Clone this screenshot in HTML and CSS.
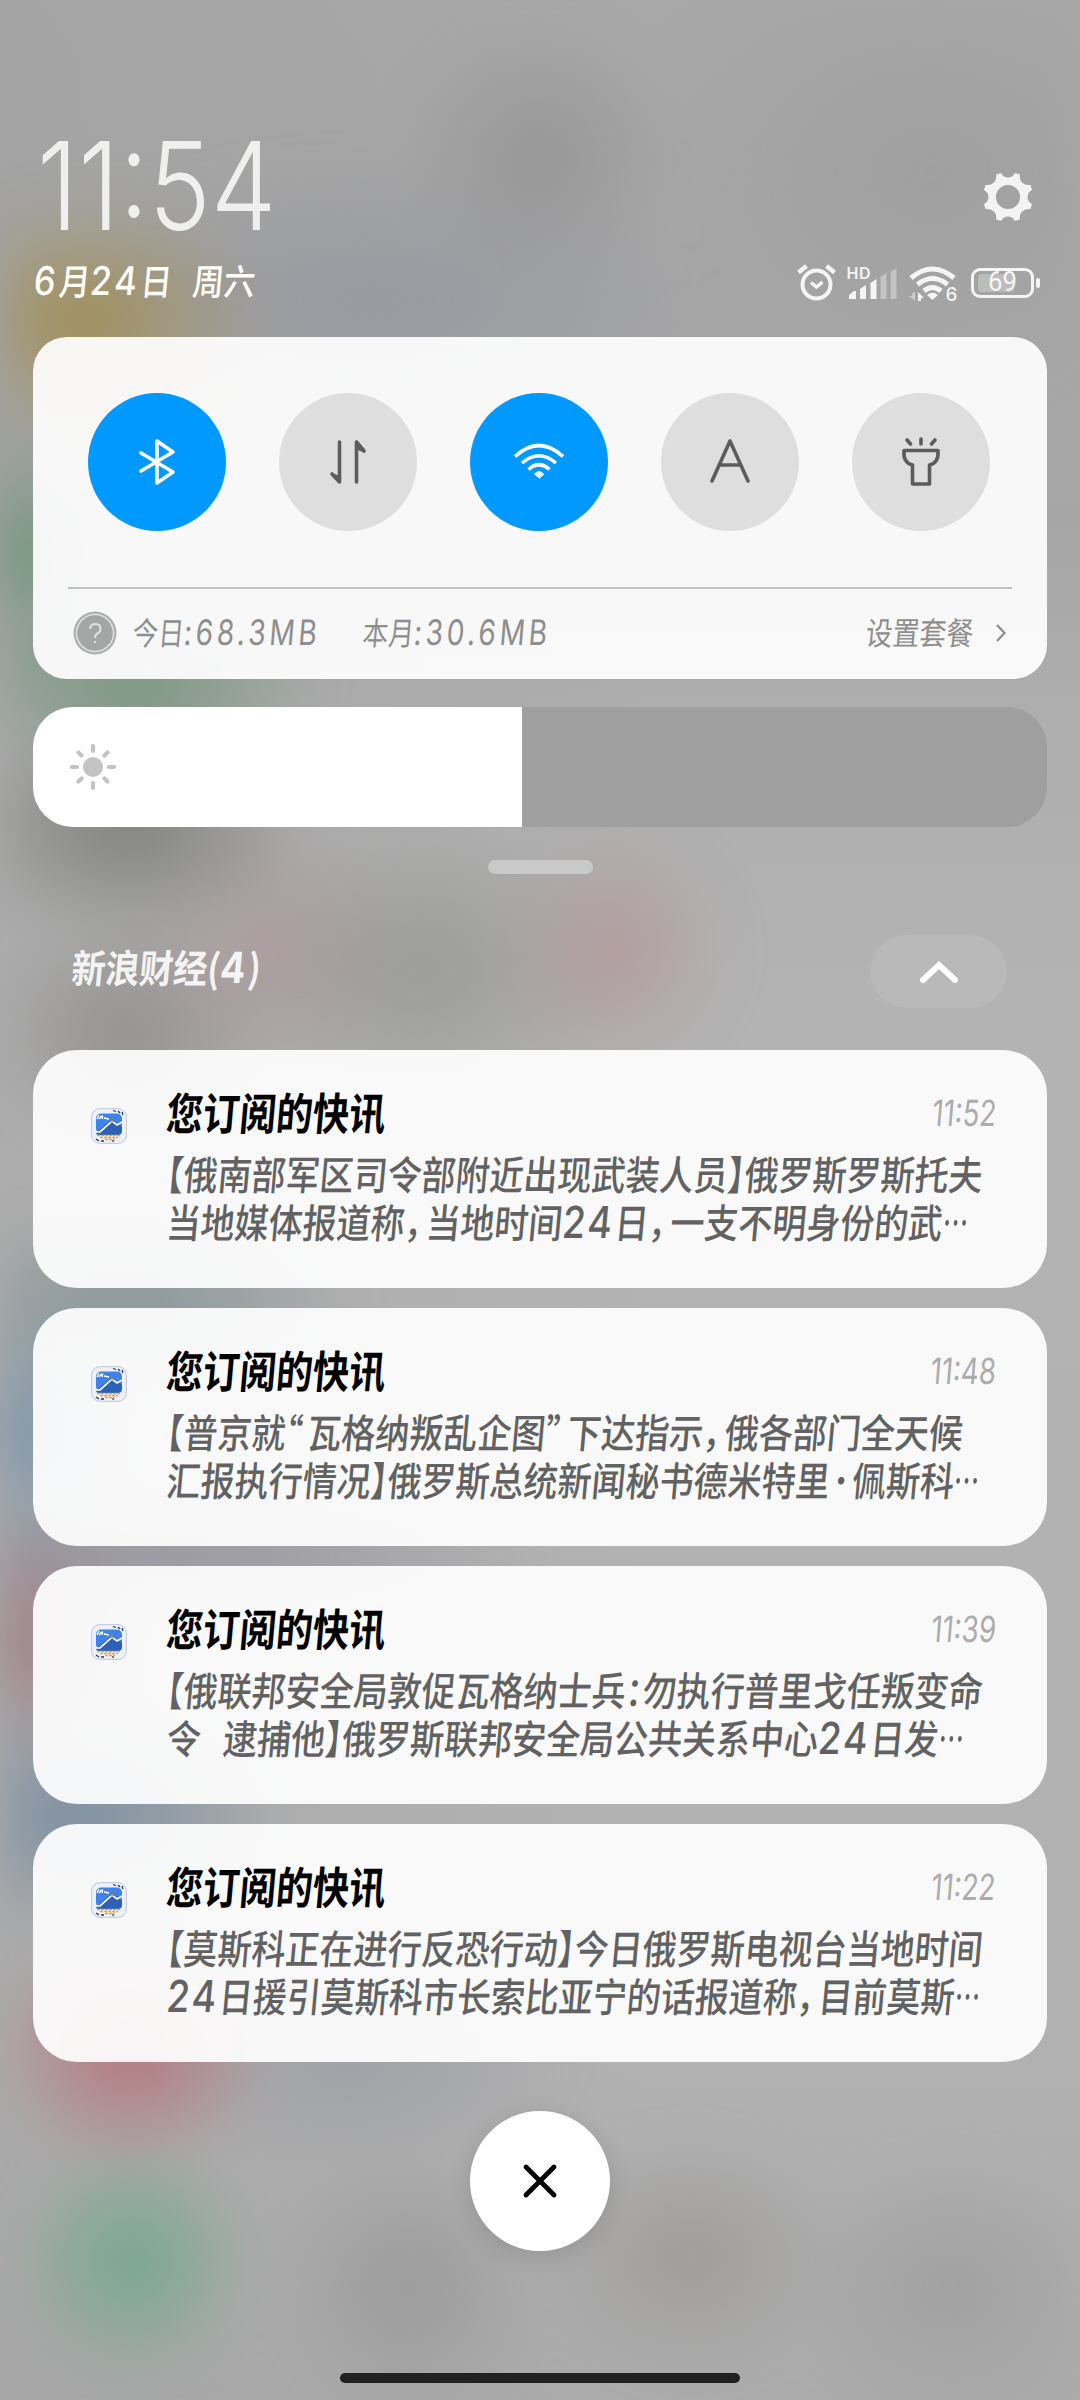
FILE: index.html
```html
<!DOCTYPE html>
<html lang="zh-CN">
<head>
<meta charset="utf-8">
<title>通知中心</title>
<link rel="stylesheet" href="styles.css">
</head>
<body>
<svg class="defs" width="0" height="0">
  <symbol id="app" viewBox="0 0 36 36">
    <rect x=".7" y=".7" width="34.6" height="34.6" rx="8" fill="#eef2f8" stroke="#b9c5e0"/>
    <rect x="5" y="5.5" width="26" height="20" rx="5" fill="#3f82e8"/>
    <path d="M5 25l16-14 10 8v4q0 4-4 4H9q-4 0-4-2z" fill="#2c61b8"/>
    <path d="M5 24l4 0 12-11 5 4 5-3" fill="none" stroke="#fff" stroke-width="1.7"/>
    <path d="M19 14l2-3 2 3z" fill="#c79a3c"/>
    <path d="M6 11l2-4M8 11q5-6 3 0m2-1l5 1" fill="none" stroke="#fff" stroke-width="1.4"/>
    <path d="M6 27.500h24M9 29.500h18M14 31.500h10" stroke="#eba43c" stroke-width="1.300" stroke-dasharray="3 1"/>
    <path d="M22 2.500l3 1M27 3l2 2M31 4l1 3M5 31l3 2M10 33h3M21 32.500l2 1" stroke="#24395f" stroke-width="1.300"/>
  </symbol>
</svg>
<main class="shade">
  <header class="top">
    <div class="clock"><span>11:54</span></div>
    <svg class="gear" viewBox="-24 -24 48 48"><path fill="#f3f3f3" fill-rule="evenodd" d="M-12 -22.500L-7 -24Q-4.500 -19.500 0 -19.500Q4.500 -19.500 7 -24L12 -22.500Q11 -17.500 14 -14.500Q17 -11.500 22.500 -12L24 -7Q19.500 -4.500 19.500 0Q19.500 4.500 24 7L22.500 12Q17 11.500 14 14.500Q11 17.500 12 22.500L7 24Q4.500 19.500 0 19.500Q-4.500 19.500 -7 24L-12 22.500Q-11 17.500 -14 14.500Q-17 11.500 -22.500 12L-24 7Q-19.500 4.500 -19.500 0Q-19.500 -4.500 -24 -7L-22.500 -12Q-17 -11.500 -14 -14.500Q-11 -17.500 -12 -22.500ZM12 0A12 12 0 1 0 -12 0A12 12 0 1 0 12 0Z"/></svg>
  </header>
  <div class="status">
    <div class="date t"><span><b>6</b>月<b>24</b>日<i class="sp"></i>周六</span></div>
    <svg class="icons" width="248" height="40" viewBox="795 263 248 40" fill="none" stroke="#f5f5f5">
      <circle cx="816.500" cy="284.500" r="14" stroke-width="4"/>
      <path d="M811 282.500l5.500 4.500 6-5" stroke-width="3.500"/>
      <path d="M798.500 272.500l8-6.500M834.500 272.500l-8-6.500" stroke-width="4.500"/>
      <text class="hd" x="846.500" y="279" textLength="24">HD</text>
      <g fill="#f5f5f5" stroke="none">
        <path d="M849 299v-4l5-4h2v8zM860 299v-10l6-4v14zM870.500 299v-16l6-4v20z"/>
        <path opacity=".4" d="M880.500 299v-22l6-4v26zM890.500 299v-27l6-4v31z"/>
        <path d="M932.500 300l-5.500-5q5.500-4.500 11 0z"/>
        <path opacity=".5" d="M915 292v9l-6-5h3l1-4z"/>
        <path d="M918 301v-9l6 6h-3v3z"/>
      </g>
      <path stroke-width="5" d="M911 278q21.500-18 43 0M917.500 284.500q15-12 30 0M924 291q8.500-7 17 0"/>
      <text class="six" x="945.500" y="300.500">6</text>
      <rect x="972.500" y="269.500" width="60" height="27" rx="7.500" stroke-width="3"/>
      <rect x="978" y="274" width="36" height="18" rx="3" fill="#fff" fill-opacity=".28" stroke="none"/>
      <rect x="1036" y="278" width="4" height="10" rx="2" fill="#f5f5f5" stroke="none"/>
      <text class="pct" x="988" y="290.500" textLength="29" lengthAdjust="spacingAndGlyphs">69</text>
    </svg>
  </div>

  <section class="qs">
    <div class="toggles">
      <div class="tg on"><svg viewBox="-24 -24 48 48"><path d="M-16 -9L16 10 0 21V-21L16 -10-16 9"/></svg></div>
      <div class="tg"><svg viewBox="-24 -24 48 48"><path d="M-8.500 -20V20L-16 12M8.500 20V-20L16 -11"/><path class="f" d="M-8.500 9V21L-16 12L-8.500 14ZM8.500 -21V-13L16 -10Z"/></svg></div>
      <div class="tg on"><svg viewBox="-24 -24 48 48"><path class="w" d="M-24 -5.500Q0 -27.500 24 -5.500M-17 1Q0 -13.500 17 1M-10.500 7.500Q0 -2 10.500 7.500"/><path class="f" d="M0 16L-4.500 12Q0 7 4.500 12Z"/></svg></div>
      <div class="tg"><svg viewBox="-24 -24 48 48"><path d="M-18 19L0 -21 18 19M-11 3H11"/></svg></div>
      <div class="tg"><svg viewBox="-24 -24 48 48"><path d="M-17 -11.500H17Q18 1 8.500 3V22H-8.500V3Q-18 1 -17 -11.500ZM0 -23V-18M-14 -22L-10.500 -18M14 -22L10.500 -18"/></svg></div>
    </div>
    <div class="usage">
      <svg class="q" viewBox="0 0 44 44"><circle cx="22" cy="22" r="21.500" fill="#aeb0ae"/><circle cx="22" cy="22" r="18.500" fill="#a3a6a4" stroke="#dfe2df" stroke-width="1.500"/><path d="M17 18q.5-5 5.500-5t5 5q0 2.500-3 4.500t-2.500 4.500M22 30v2" fill="none" stroke="#e2e4e2" stroke-width="2"/></svg>
      <div class="t today"><span>今日<b>:68.3MB</b></span></div>
      <div class="t month"><span>本月<b>:30.6MB</b></span></div>
      <div class="t plan"><span>设置套餐</span></div>
      <svg class="go" viewBox="0 0 12 20"><path d="M2 2L9.500 10 2 18" fill="none" stroke="#8e8e8e" stroke-width="2.200"/></svg>
    </div>
  </section>

  <div class="slider"><div class="fill">
    <svg viewBox="-24 -24 48 48"><circle r="10" fill="#c3c3c3"/><path d="M0 -21V-16M0 21V16M-21 0H-16M21 0H16M-14.500 -14.500L-11.500 -11.500M14.500 14.500L11.500 11.500M-14.500 14.500L-11.500 11.500M14.500 -14.500L11.500 -11.500" stroke="#c3c3c3" stroke-width="4.200" stroke-linecap="round"/></svg>
  </div></div>
  <div class="handle"></div>

  <div class="group">
    <div class="t gname"><span>新浪财经(<b>4</b>)</span></div>
    <div class="collapse"><svg viewBox="0 0 40 24"><path d="M4 20L20 5 36 20" fill="none" stroke="#fff" stroke-width="6" stroke-linecap="round"/></svg></div>
  </div>

  <section class="list">
    <article class="card">
      <svg class="app"><use href="#app"/></svg>
      <div class="body">
        <div class="head"><div class="t title"><span>您订阅的快讯</span></div><div class="t time"><span>11:52</span></div></div>
        <div class="t line"><span><u>【</u>俄南部军区司令部附近出现武装人员<u>】</u>俄罗斯罗斯托夫</span></div>
        <div class="t line"><span>当地媒体报道称<u class="c">，</u>当地时间<b>24</b>日<u class="c">，</u>一支不明身份的武<s>…</s></span></div>
      </div>
    </article>
    <article class="card">
      <svg class="app"><use href="#app"/></svg>
      <div class="body">
        <div class="head"><div class="t title"><span>您订阅的快讯</span></div><div class="t time"><span>11:48</span></div></div>
        <div class="t line"><span><u>【</u>普京就<u class="c">“</u>瓦格纳叛乱企图<u class="c">”</u>下达指示<u class="c">，</u>俄各部门全天候</span></div>
        <div class="t line"><span>汇报执行情况<u>】</u>俄罗斯总统新闻秘书德米特里<u class="dot">·</u>佩斯科<s>…</s></span></div>
      </div>
    </article>
    <article class="card">
      <svg class="app"><use href="#app"/></svg>
      <div class="body">
        <div class="head"><div class="t title"><span>您订阅的快讯</span></div><div class="t time"><span>11:39</span></div></div>
        <div class="t line"><span><u>【</u>俄联邦安全局敦促瓦格纳士兵<u>：</u>勿执行普里戈任叛变命</span></div>
        <div class="t line"><span>令<i class="sp"></i>逮捕他<u>】</u>俄罗斯联邦安全局公共关系中心<b>24</b>日发<s>…</s></span></div>
      </div>
    </article>
    <article class="card">
      <svg class="app"><use href="#app"/></svg>
      <div class="body">
        <div class="head"><div class="t title"><span>您订阅的快讯</span></div><div class="t time"><span>11:22</span></div></div>
        <div class="t line"><span><u>【</u>莫斯科正在进行反恐行动<u>】</u>今日俄罗斯电视台当地时间</span></div>
        <div class="t line"><span><b>24</b>日援引莫斯科市长索比亚宁的话报道称<u class="c">，</u>目前莫斯<s>…</s></span></div>
      </div>
    </article>
  </section>

  <div class="close"><svg viewBox="-20 -20 40 40"><path d="M-14 -14L14 14M14 -14L-14 14" stroke="#000" stroke-width="4.800" stroke-linecap="round"/></svg></div>
  <div class="home"></div>
</main>
</body>
</html>
```
FILE: styles.css
```css
* { box-sizing: border-box; }
body { margin: 0; font-family: "Noto Sans CJK SC", sans-serif; }
.defs { display: block; }
.shade {
  position: relative; isolation: isolate;
  width: 1080px; height: 2400px; padding: 132px 33px 0; overflow: hidden;
  display: flex; flex-direction: column;
  background:
    linear-gradient(90deg, rgba(150,150,150,.22), transparent 60%),
    linear-gradient(#a8a8a8 0, #a6a6a6 22%, #aeaeae 30%, #b3b3b3 42%, #b1b1b1 86%, #ababab 100%);
}
/* Blurred home-screen icons behind the shade */
.shade::before {
  content: ""; position: absolute; inset: 0; z-index: -1; filter: blur(22px);
  background:
    radial-gradient(140px 130px at 540px 155px, rgba(140,140,140,.6), transparent),
    radial-gradient(300px 230px at 930px 170px, rgba(150,150,150,.4), transparent),
    radial-gradient(190px 130px at 85px 320px, rgba(162,140,72,.85), rgba(162,140,72,.35) 50%, transparent),
    radial-gradient(360px 140px at 380px 300px, rgba(143,146,158,.6), transparent),
    radial-gradient(120px 140px at 15px 555px, rgba(100,146,112,.85), rgba(100,146,112,.3) 50%, transparent),
    radial-gradient(190px 80px at 135px 685px, rgba(108,146,116,.8), transparent),
    radial-gradient(180px 120px at 130px 825px, rgba(115,116,110,.75), transparent),
    radial-gradient(130px 130px at 265px 950px, rgba(174,145,145,.5), transparent),
    radial-gradient(120px 130px at 615px 950px, rgba(180,145,147,.65), transparent),
    radial-gradient(210px 150px at 420px 970px, rgba(140,142,136,.6), transparent),
    radial-gradient(150px 120px at 130px 1030px, rgba(130,125,122,.6), transparent),
    radial-gradient(230px 90px at 130px 1300px, rgba(118,138,144,.65), transparent),
    radial-gradient(120px 130px at 20px 1430px, rgba(116,144,170,.85), transparent),
    radial-gradient(130px 120px at 15px 1640px, rgba(154,116,124,.8), transparent),
    radial-gradient(400px 60px at 150px 1555px, rgba(135,132,150,.6), transparent),
    radial-gradient(210px 120px at 80px 1815px, rgba(110,134,158,.75), transparent),
    radial-gradient(140px 120px at 130px 2050px, rgba(184,108,116,.85), transparent),
    radial-gradient(220px 110px at 350px 2060px, rgba(145,148,160,.5), transparent),
    radial-gradient(120px 120px at 132px 2260px, rgba(112,168,138,.9), transparent),
    radial-gradient(130px 130px at 410px 2285px, rgba(145,144,144,.6), transparent),
    radial-gradient(150px 120px at 690px 2255px, rgba(150,146,143,.6), transparent),
    radial-gradient(160px 130px at 950px 2285px, rgba(148,148,148,.5), transparent);
}

/* Condensed, slanted lettering: the inner span is scaled inside a fixed-height row */
.t { white-space: nowrap; }
.t > span { display: inline-block; transform-origin: 0 50%; transform: translateY(-2px) scaleX(var(--k, .85)) skewX(-6deg); }
.t b { font-family: "Inter", sans-serif; font-weight: inherit; font-size: 1.1em; line-height: 1; letter-spacing: .07em; }
.t u { text-decoration: none; font-feature-settings: "halt"; }
.t .c { margin-right: .14em; }
.t .dot { margin: 0 .08em; font-weight: 300; }
.t s { text-decoration: none; display: inline-block; width: .8em; transform: scaleX(.75); transform-origin: 0 50%; }
.sp { display: inline-block; width: .66em; }

.top { display: flex; justify-content: space-between; height: 124px; }
.clock { width: 260px; height: 110px; padding-left: 4px; }
.clock span { display: block; width: 300px; font: 300 123px/108px "Inter", sans-serif; color: #efefed; transform: scaleX(.85); transform-origin: 0 50%; }
.gear { width: 48px; height: 48px; margin: 41px 15px 0 0; }
.status { display: flex; justify-content: space-between; height: 81px; padding-top: 7px; }
.date { --k: .87; color: #fffdf8; font-size: 36px; line-height: 36px; font-weight: 500; padding-left: 1px; }
.date b { letter-spacing: .1em; }
.icons { margin-right: 4px; overflow: visible; }
.icons text { fill: #f5f5f5; stroke: none; font-family: "Inter", sans-serif; }
.icons .hd { font-size: 16px; font-weight: 600; }
.icons .six { font-size: 19px; font-weight: 500; }
.icons .pct { font-size: 27px; font-weight: 400; font-family: "Roboto", sans-serif; }

.qs { height: 342px; border-radius: 34px; padding: 56px 35px 0; background: rgba(255,255,255,.92); }
.toggles { display: flex; gap: 53px; padding-left: 20px; height: 194px; }
.tg { width: 138px; height: 138px; border-radius: 50%; background: #dedede; display: grid; place-items: center; flex: none; }
.tg svg { width: 48px; height: 48px; overflow: visible; fill: none; stroke: #5c5c5c; stroke-width: 3.6; stroke-linecap: round; stroke-linejoin: round; }
.tg.on { background: #0099ff; }
.tg.on svg { stroke: #fff; }
.tg .f { fill: #5c5c5c; stroke-width: 1; }
.tg.on .f { fill: #fff; }
.tg .w { stroke-linecap: butt; }
.usage { border-top: 2px solid #c2c2c2; display: flex; align-items: center; height: 89px; color: #8e8e8e; font-size: 32px; line-height: 40px; }
.usage b { letter-spacing: .13em; }
.q { width: 44px; height: 44px; margin-left: 5px; }
.today { width: 230px; margin-left: 16px; --k: .8; }
.month { width: 300px; --k: .8; }
.plan { --k: .84; margin-left: auto; width: 129px; }
.go { width: 12px; height: 20px; margin-right: 5px; }

.slider { margin-top: 28px; height: 120px; border-radius: 40px; background: #9f9f9f; overflow: hidden; flex: none; }
.fill { width: 489px; height: 120px; background: #fff; display: flex; align-items: center; padding-left: 36px; }
.fill svg { width: 48px; height: 48px; }
.handle { width: 105px; height: 14px; border-radius: 7px; background: #c9c9c9; margin: 33px auto 0; flex: none; }
.group { display: flex; justify-content: space-between; margin-top: 61px; padding: 0 40px 0 39px; height: 115px; flex: none; }
.gname { --k: .87; font-size: 39px; font-weight: 700; line-height: 66px; color: #f4f4f4; }
.collapse { width: 137px; height: 73px; border-radius: 37px; background: #b9b9b9; display: grid; place-items: center; }
.collapse svg { width: 40px; height: 24px; }

.list { display: flex; flex-direction: column; gap: 20px; }
.card { display: flex; height: 238px; border-radius: 44px; background: rgba(255,255,255,.92); padding: 34px 0 0 58px; }
.app { width: 36px; height: 36px; margin-top: 24px; flex: none; }
.body { padding-left: 40px; flex: 1; min-width: 0; }
.head { display: flex; justify-content: space-between; height: 67px; padding-right: 51px; }
.title { --k: .83; font-size: 44px; line-height: 58px; font-weight: 700; color: #000; }
.time { --k: .77; font: 400 36px/62px "Inter", sans-serif; color: #acacac; }
.time > span { transform-origin: 100% 50%; }
.line { font-size: 40px; line-height: 48px; height: 48px; font-weight: 500; color: #626262; }

.close { width: 140px; height: 140px; border-radius: 50%; background: #fff; box-shadow: 0 6px 24px rgba(0,0,0,.12); margin: 49px auto 0; display: grid; place-items: center; flex: none; }
.close svg { width: 40px; height: 40px; }
.home { width: 400px; height: 10px; border-radius: 5px; background: #212121; margin: 122px auto 0; flex: none; }
```
